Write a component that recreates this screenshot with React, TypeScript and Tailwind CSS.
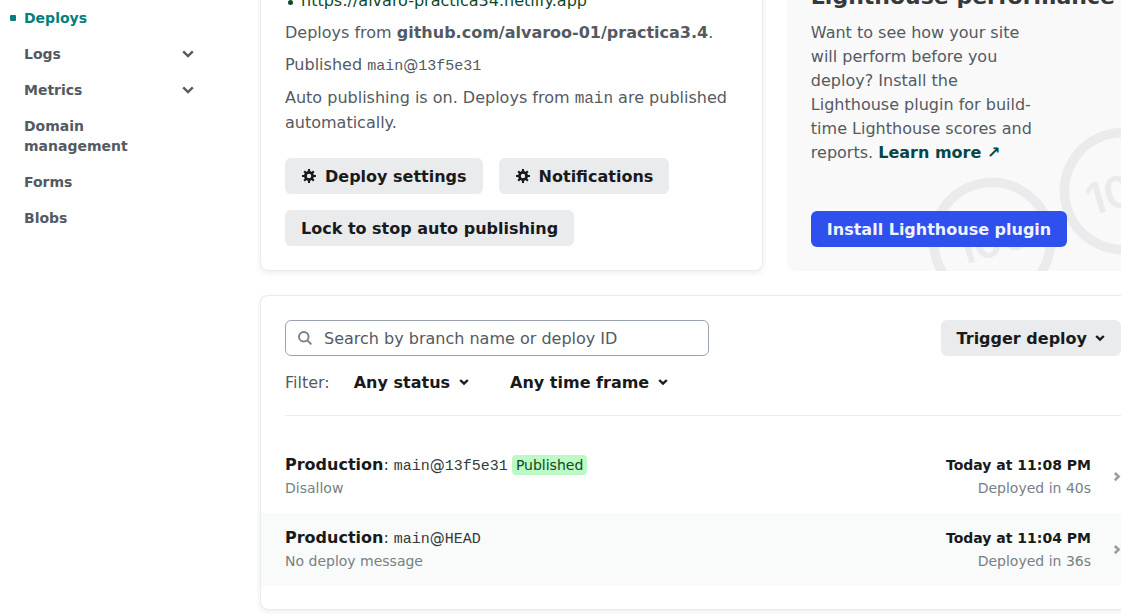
import type { ReactNode } from "react";

const navItems = [
  { label: "Deploys", active: true },
  { label: "Logs", expandable: true },
  { label: "Metrics", expandable: true },
  { label: "Domain management" },
  { label: "Forms" },
  { label: "Blobs" },
];

const deploys = [
  { branch: "main", commit: "13f5e31", message: "Disallow", time: "Today at 11:08 PM", duration: "Deployed in 40s", published: true },
  { branch: "main", commit: "HEAD", message: "No deploy message", time: "Today at 11:04 PM", duration: "Deployed in 36s", published: false },
];

function ChevronDown({ className }: { className: string }) {
  return (
    <svg className={className} viewBox="0 0 12 8" fill="none" stroke="currentColor" strokeWidth="2.4" aria-hidden="true">
      <path d="M1.2 1.4 6 6l4.8-4.6" />
    </svg>
  );
}

function Caret({ className }: { className: string }) {
  return (
    <svg className={className} viewBox="0 0 10 8" fill="none" stroke="currentColor" strokeWidth="2.4" aria-hidden="true">
      <path d="M1.2 2 5 5.6 8.8 2" />
    </svg>
  );
}

function Gear() {
  return (
    <svg className="size-4" viewBox="0 0 16 16" fill="none" stroke="currentColor" aria-hidden="true">
      <circle cx="8" cy="8" r="3.6" strokeWidth="2.8" />
      <path
        strokeWidth="2.1"
        d="M8 1v3M8 12v3M1 8h3M12 8h3M3.2 3.2l2 2M10.8 10.8l2 2M3.2 12.8l2-2M10.8 5.2l2-2"
      />
    </svg>
  );
}

function CommitRef({ branch, commit }: { branch: string; commit: string }) {
  return (
    <code className="font-['Liberation_Mono',monospace] text-[15px] leading-none">
      {branch}
      <span className="font-['DejaVu_Sans',sans-serif]">@</span>
      {commit}
    </code>
  );
}

function Button({ children }: { children: ReactNode }) {
  return (
    <button type="button" className="flex h-9 items-center gap-2 rounded-md bg-[#e9ebed] px-4 leading-[25px] font-bold whitespace-nowrap text-[#181a1c]">
      {children}
    </button>
  );
}

function FilterButton({ children }: { children: ReactNode }) {
  return (
    <button type="button" aria-haspopup="menu" className="flex h-9 items-center gap-2 px-4 leading-[25px] font-bold text-[#181a1c]">
      {children}
      <Caret className="h-2 w-3" />
    </button>
  );
}

function Sidebar() {
  return (
    <nav className="w-[194px] shrink-0 text-sm font-bold text-[#545a61]">
      <ul>
        {navItems.map((item) => (
          <li key={item.label}>
            <a
              href="#"
              aria-current={item.active ? "page" : undefined}
              className={item.active ? "flex items-center gap-2 py-2 pl-[10px] text-[#02807d]" : "flex items-center justify-between py-2 pl-6"}
            >
              {item.active && <span className="size-[6px] rounded-[1px] bg-[#02807d]" />}
              <span className="max-w-36">{item.label}</span>
              {item.expandable && <ChevronDown className="w-3" />}
            </a>
          </li>
        ))}
      </ul>
    </nav>
  );
}

function SiteCard() {
  return (
    <section className="rounded-lg border border-t-0 border-[#e9ebed] bg-white px-6 pt-1 pb-6 shadow-[0_2px_6px_rgba(14,30,37,0.08)]">
      <div className="space-y-2">
        <ul className="text-[#0b4a2b]">
          <li className="flex items-center gap-2 pl-[3px]">
            <span className="mt-[3px] size-[5px] rounded-full bg-current" />
            <a href="#">https://alvaro-practica34.netlify.app</a>
          </li>
        </ul>
        <p>
          Deploys from{" "}
          <a href="#" className="font-bold">
            github.com/alvaroo-01/practica3.4
          </a>
          .
        </p>
        <p>
          Published <CommitRef branch="main" commit="13f5e31" />
        </p>
        <p className="leading-[25px]">
          Auto publishing is on. Deploys from <code className="font-['Liberation_Mono',monospace] leading-none">main</code> are published automatically.
        </p>
      </div>
      <div className="mt-[23px] flex flex-wrap gap-4">
        <Button>
          <Gear />
          Deploy settings
        </Button>
        <Button>
          <Gear />
          Notifications
        </Button>
        <Button>Lock to stop auto publishing</Button>
      </div>
    </section>
  );
}

function ScoreRings() {
  return (
    <svg className="absolute right-0 bottom-0 h-[160px] w-[240px]" viewBox="0 0 240 160" aria-hidden="true">
      {[
        { x: 86, y: 130 },
        { x: 217, y: 80 },
      ].map(({ x, y }) => (
        <g key={x} transform={`translate(${x} ${y}) rotate(-16)`}>
          <circle r="58.5" fill="none" stroke="#e9ebed" strokeWidth="9.5" />
          <text y="15" textAnchor="middle" fill="#e9ebed" fontSize="43" fontWeight="600" fontFamily="Inter, sans-serif">
            100
          </text>
        </g>
      ))}
    </svg>
  );
}

function LighthouseCard() {
  return (
    <section className="relative flex flex-col items-start overflow-hidden rounded-lg bg-[#f9f9f9] px-6 pb-6">
      <ScoreRings />
      <h2 className="relative mb-3 text-[22px] leading-6 font-bold whitespace-nowrap text-[#35393d]">Lighthouse performance</h2>
      <p className="relative w-3/4">
        Want to see how your site will perform before you deploy? Install the Lighthouse plugin for build-time Lighthouse scores and reports.{" "}
        <a href="#" className="font-bold whitespace-nowrap text-[#054747]">
          Learn more ↗
        </a>
      </p>
      <button
        type="button"
        className="relative mt-auto flex h-9 items-center rounded-md bg-[#2e51ed] px-4 leading-[25px] font-bold whitespace-nowrap text-[#eff3ff]"
      >
        Install Lighthouse plugin
      </button>
    </section>
  );
}

function DeployList() {
  return (
    <section className="rounded-lg border border-[#e9ebed] bg-white pt-6 pb-[23px] shadow-[0_2px_6px_rgba(14,30,37,0.08)]">
      <div className="mx-6 border-b border-[#e9ebed] pb-[15px]">
        <div className="flex items-center justify-between">
          <label className="flex h-9 w-[424px] items-center gap-3 rounded-md border border-[#9aa4b0] px-3">
            <svg className="size-[14px] shrink-0 text-[#778088]" viewBox="0 0 14 14" fill="none" stroke="currentColor" strokeWidth="1.9" aria-hidden="true">
              <circle cx="5.8" cy="5.8" r="4.8" />
              <path d="m9.2 9.2 4.2 4.2" />
            </svg>
            <input
              type="search"
              aria-label="Search deploys"
              placeholder="Search by branch name or deploy ID"
              className="h-[25px] min-w-0 flex-1 bg-transparent leading-[25px] outline-none placeholder:text-[#545a61]"
            />
          </label>
          <Button>
            Trigger deploy
            <Caret className="h-2 w-[10px]" />
          </Button>
        </div>
        <div className="mt-2 flex items-center gap-2 leading-[25px]">
          <span>Filter:</span>
          <FilterButton>Any status</FilterButton>
          <FilterButton>Any time frame</FilterButton>
        </div>
      </div>
      <ul className="mt-6">
        {deploys.map((deploy) => (
          <li key={deploy.commit} className="even:bg-[#f9fbfa]">
            <a href="#" className="flex h-[73px] items-center justify-between px-6">
              <div>
                <div className="flex items-baseline text-[#35393d]">
                  <strong className="text-[#181a1c]">Production</strong>
                  <span className="mr-[5px]">:</span>
                  <CommitRef branch={deploy.branch} commit={deploy.commit} />
                  {deploy.published && <span className="ml-1 rounded-sm bg-[#bbf9c5] px-1 text-sm text-[#0f4a21]">Published</span>}
                </div>
                <p className="text-sm leading-[23px] text-[#778083]">{deploy.message}</p>
              </div>
              <div className="flex items-center gap-[22px]">
                <div className="text-right text-sm leading-[23px]">
                  <div className="font-bold text-[#181a1c]">{deploy.time}</div>
                  <div className="text-[#778083]">{deploy.duration}</div>
                </div>
                <svg className="h-[10px] w-2 text-[#9b9e9f]" viewBox="0 0 8 10" fill="none" stroke="currentColor" strokeWidth="2.6" aria-hidden="true">
                  <path d="M1.8 1 5.6 4.6 1.8 8.2" />
                </svg>
              </div>
            </a>
          </li>
        ))}
      </ul>
    </section>
  );
}

export default function App() {
  return (
    <div className="flex overflow-hidden bg-white pb-1 font-['DejaVu_Sans',sans-serif] text-base text-[#545a61]">
      <Sidebar />
      <main className="-mt-[15px] -mr-[25px] ml-[66px] min-w-0 flex-1 space-y-6">
        <div className="grid grid-cols-[7fr_5fr] gap-6">
          <SiteCard />
          <LighthouseCard />
        </div>
        <DeployList />
      </main>
    </div>
  );
}
